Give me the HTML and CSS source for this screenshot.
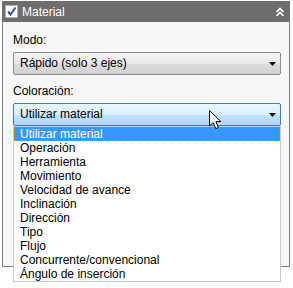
FILE: index.html
```html
<!DOCTYPE html>
<html lang="es">
<head>
    <meta charset="UTF-8">
    <title>Material</title>
    <link rel="stylesheet" href="styles.css">
</head>
<body>
    <div class="panel">
        <div class="panel-head">
            <span class="check">
                <svg width="11" height="11" viewBox="0 0 11 11"><path d="M2 5.5 L4.5 8.5 L9.5 1.5" fill="none" stroke="#2a50b8" stroke-width="2"/></svg>
            </span>
            <span class="title">Material</span>
            <svg class="collapse" width="10" height="10" viewBox="0 0 10 10"><path d="M1.5 5 L5 1.5 L8.5 5 M1.5 9 L5 5.5 L8.5 9" fill="none" stroke="#fff" stroke-width="1.6"/></svg>
        </div>
        <div class="panel-body">
            <div class="field-label">Modo:</div>
            <div class="combo">
                <span>Rápido (solo 3 ejes)</span>
                <svg class="arrow" width="7" height="4" viewBox="0 0 7 4"><path d="M0 0 H7 L3.5 4 Z" fill="#000"/></svg>
            </div>

            <div class="field-label">Coloración:</div>
            <div class="combo-wrap">
                <div class="combo combo-open">
                    <span>Utilizar material</span>
                    <svg class="arrow" width="7" height="4" viewBox="0 0 7 4"><path d="M0 0 H7 L3.5 4 Z" fill="#000"/></svg>
                </div>
                <ul class="drop-list">
                    <li class="selected">Utilizar material</li>
                    <li>Operación</li>
                    <li>Herramienta</li>
                    <li>Movimiento</li>
                    <li>Velocidad de avance</li>
                    <li>Inclinación</li>
                    <li>Dirección</li>
                    <li>Tipo</li>
                    <li>Flujo</li>
                    <li>Concurrente/convencional</li>
                    <li>Ángulo de inserción</li>
                </ul>
                <!-- mouse pointer over the open combo -->
                <svg class="cursor" width="13" height="20" viewBox="0 0 13 20"><path d="M0.5 0.5 L0.5 16 L4.2 12.6 L6.8 18.6 L9.4 17.5 L6.9 11.6 L11.8 11.6 Z" fill="#fff" stroke="#000" stroke-width="1" stroke-linejoin="round"/></svg>
            </div>
        </div>
    </div>
</body>
</html>
```

FILE: styles.css
```css
html, body { height: 100%; }
body { margin: 0; min-height: 288px; background: #fff; font-family: "Liberation Sans", Arial, sans-serif; font-size: 12px; color: #000; }
.panel { width: 288px; margin: 1px 0 0 2px; }
.panel-head { height: 21px; background: #6d6d6d; display: flex; align-items: center; padding: 0 5px 0 3px; color: #fff; }
.check { width: 13px; height: 13px; box-sizing: border-box; background: #fff; border: 1px solid #b0b0b0; display: flex; align-items: center; justify-content: center; }
.title { margin-left: 4px; font-size: 12px; }
.collapse { margin-left: auto; }
.panel-body { background: #f7f7f7; border: 1px solid #7a7a7a; border-top: none; padding: 11px 8px 0 10px; height: 233px; }
.field-label { line-height: 15px; margin-bottom: 4px; }
.combo { height: 23px; box-sizing: border-box; border: 1px solid #8c8c8c; border-radius: 2px; background: linear-gradient(#f4f4f4, #e8e8e8 50%, #dcdcdc 51%, #d2d2d2); display: flex; align-items: center; padding: 0 4px 0 6px; margin-bottom: 9px; }
.combo span { flex: 1; line-height: 15px; }
.combo-wrap { position: relative; }
.combo-open { border-color: #3c7fb1; background: linear-gradient(#eaf6fd, #d9f0fc 50%, #bee6fd 51%, #a7d9f5); margin-bottom: 0; }
.drop-list { position: absolute; z-index: 2; left: 0; right: 0; top: 23px; margin: 0; padding: 0; list-style: none; background: #fff; border: 1px solid #c6c6d6; }
.drop-list li { height: 14px; line-height: 14px; padding-left: 6px; box-sizing: border-box; white-space: nowrap; overflow: hidden; }
.drop-list li.selected { background: #3399ff; color: #fff; border: 1px dotted #d9822b; line-height: 12px; padding-left: 5px; }
.cursor { position: absolute; z-index: 3; left: 196px; top: 7px; }
```
